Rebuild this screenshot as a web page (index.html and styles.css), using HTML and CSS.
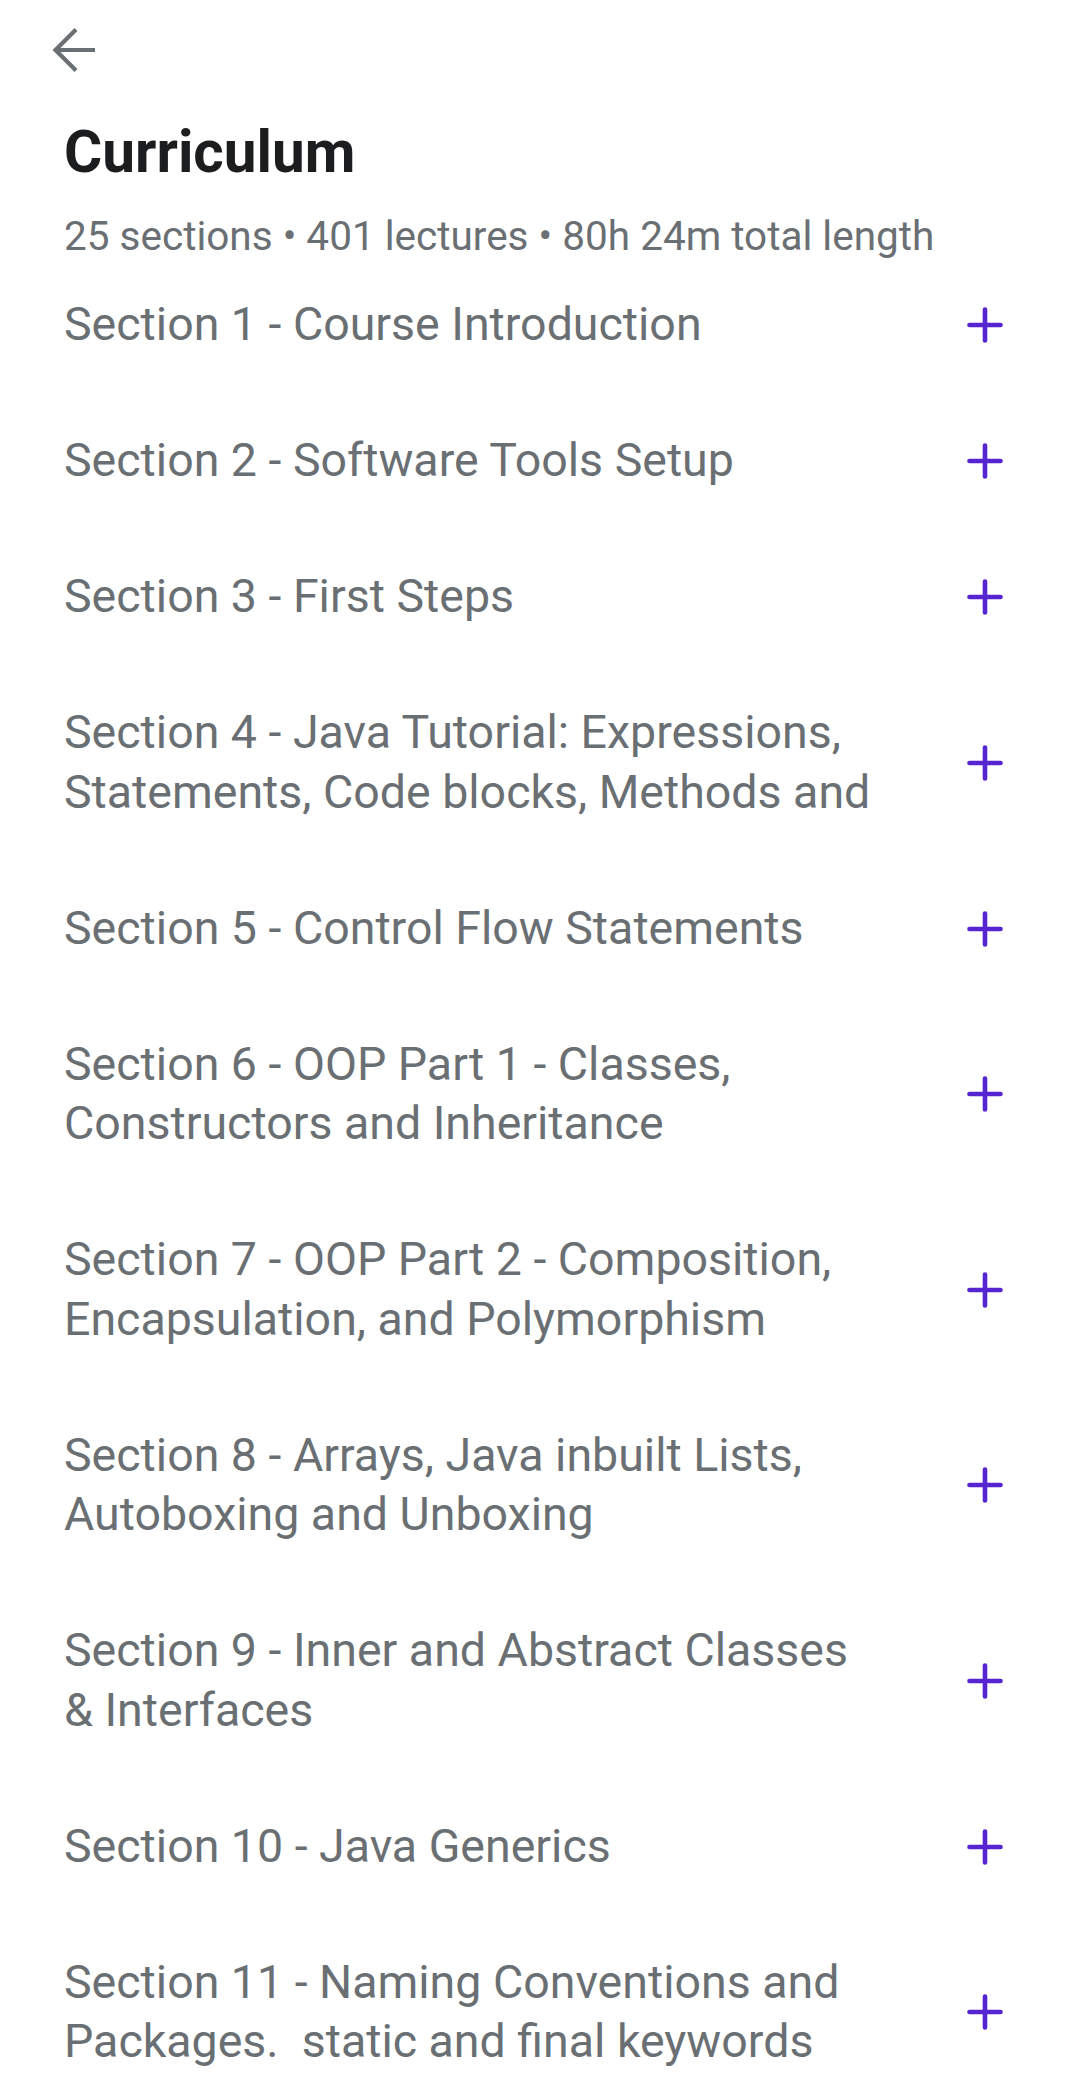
FILE: index.html
```html
<!DOCTYPE html>
<html lang="en">
<head>
<meta charset="utf-8">
<title>Curriculum</title>
<link rel="stylesheet" href="styles.css">
</head>
<body>
<div class="page">
  <header class="topbar">
    <button class="back" aria-label="Back">
      <svg width="48" height="48" viewBox="0 0 48 48" fill="none" stroke="#6a6f73" stroke-width="4.2" stroke-linejoin="miter" stroke-linecap="butt">
        <path d="M45 24H6"/>
        <path d="M26 3.5L5.5 24L26 44.5"/>
      </svg>
    </button>
  </header>
  <h1 class="title">Curriculum</h1>
  <p class="meta">25 sections • 401 lectures • 80h 24m total length</p>
  <ul class="sections">
    <li class="section"><span class="name">Section 1 - Course Introduction</span><span class="plus"><svg viewBox="0 0 36 36"><path d="M18 2.5V33.5M2.5 18H33.5"/></svg></span></li>
    <li class="section"><span class="name">Section 2 - Software Tools Setup</span><span class="plus"><svg viewBox="0 0 36 36"><path d="M18 2.5V33.5M2.5 18H33.5"/></svg></span></li>
    <li class="section"><span class="name">Section 3 - First Steps</span><span class="plus"><svg viewBox="0 0 36 36"><path d="M18 2.5V33.5M2.5 18H33.5"/></svg></span></li>
    <li class="section"><span class="name">Section 4 - Java Tutorial: Expressions, Statements, Code blocks, Methods and</span><span class="plus"><svg viewBox="0 0 36 36"><path d="M18 2.5V33.5M2.5 18H33.5"/></svg></span></li>
    <li class="section"><span class="name">Section 5 - Control Flow Statements</span><span class="plus"><svg viewBox="0 0 36 36"><path d="M18 2.5V33.5M2.5 18H33.5"/></svg></span></li>
    <li class="section"><span class="name">Section 6 - OOP Part 1 - Classes, Constructors and Inheritance</span><span class="plus"><svg viewBox="0 0 36 36"><path d="M18 2.5V33.5M2.5 18H33.5"/></svg></span></li>
    <li class="section"><span class="name">Section 7 - OOP Part 2 - Composition, Encapsulation, and Polymorphism</span><span class="plus"><svg viewBox="0 0 36 36"><path d="M18 2.5V33.5M2.5 18H33.5"/></svg></span></li>
    <li class="section"><span class="name">Section 8 - Arrays, Java inbuilt Lists, Autoboxing and Unboxing</span><span class="plus"><svg viewBox="0 0 36 36"><path d="M18 2.5V33.5M2.5 18H33.5"/></svg></span></li>
    <li class="section"><span class="name">Section 9 - Inner and Abstract Classes &amp; Interfaces</span><span class="plus"><svg viewBox="0 0 36 36"><path d="M18 2.5V33.5M2.5 18H33.5"/></svg></span></li>
    <li class="section"><span class="name">Section 10 - Java Generics</span><span class="plus"><svg viewBox="0 0 36 36"><path d="M18 2.5V33.5M2.5 18H33.5"/></svg></span></li>
    <li class="section"><span class="name">Section 11 - Naming Conventions and Packages.&nbsp; static and final keywords</span><span class="plus"><svg viewBox="0 0 36 36"><path d="M18 2.5V33.5M2.5 18H33.5"/></svg></span></li>
  </ul>
</div>
</body>
</html>
```

FILE: styles.css
```css
* { box-sizing: border-box; }
html, body {
  margin: 0;
  padding: 0;
  background: #ffffff;
}
body {
  font-family: Roboto, "Noto Sans", sans-serif;
  color: #1c1d1f;
}
.page {
  padding: 0 77px 0 64px;
}
.topbar {
  height: 100px;
  display: flex;
  align-items: center;
  margin-left: -14px;
}
.back {
  border: 0;
  background: none;
  padding: 0;
  width: 48px;
  height: 48px;
  display: block;
  cursor: pointer;
}
.back svg { display: block; }
.title {
  margin: 19px 0 0 0;
  font-size: 58.5px;
  line-height: 66px;
  font-weight: 700;
  color: #1c1d1f;
}
.meta {
  margin: 30px 0 0 0;
  font-size: 40.5px;
  line-height: 42px;
  color: #6a6f73;
  white-space: nowrap;
}
.sections {
  list-style: none;
  margin: 0;
  padding: 0;
}
.section {
  display: flex;
  align-items: center;
  gap: 87px;
  padding: 38.25px 0;
}
.name {
  flex: 1;
  font-size: 46.5px;
  line-height: 59.5px;
  color: #6a6f73;
}
.plus {
  width: 36px;
  height: 36px;
  flex: none;
}
.plus svg {
  display: block;
  width: 36px;
  height: 36px;
  fill: none;
  stroke: #5624d0;
  stroke-width: 4.6;
  stroke-linecap: round;
}
```
